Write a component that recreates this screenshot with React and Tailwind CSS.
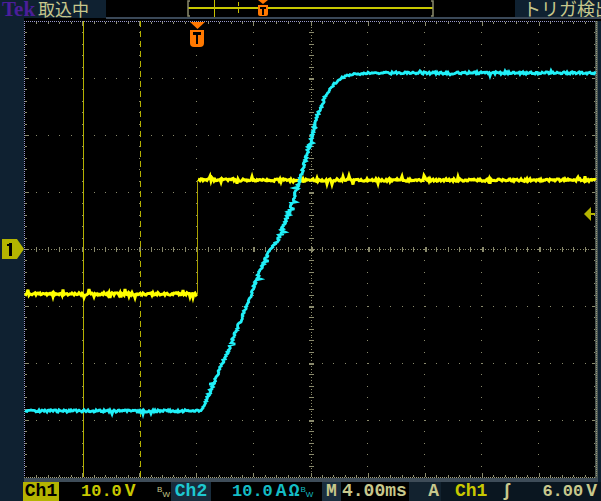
import React from 'react';

// scope screen: plot origin in page coords
const OX = 24;
const OY = 21;
const X0 = 1;
const DX = 57.1;
const DY = 57;
const MX = DX / 5;
const MY = DY / 5;

const gx = (k) => X0 + k * DX;
const gy = (k) => k * DY;

function rng(seed) {
    let s = seed >>> 0;
    return () => {
        s = (s * 1664525 + 1013904223) >>> 0;
        return s / 4294967296;
    };
}

// noisy polyline, points given in page coords
function noisyPath(points, seed, amp, spike = 0) {
    const r = rng(seed);
    let d = '';
    for (let i = 0; i < points.length - 1; i++) {
        const [x1, y1] = points[i];
        const [x2, y2] = points[i + 1];
        const steep = Math.abs(y2 - y1) > Math.abs(x2 - x1);
        const n = Math.max(1, Math.round(Math.max(Math.abs(x2 - x1), Math.abs(y2 - y1))));
        for (let j = 0; j < n; j++) {
            const t = j / n;
            let x = x1 + (x2 - x1) * t;
            let y = y1 + (y2 - y1) * t;
            let jitter = (r() - 0.5) * amp;
            if (spike && r() < spike) jitter += (r() < 0.5 ? -1 : 1) * (2 + r() * 2);
            if (steep) x += jitter;
            else y += jitter;
            d += (d ? 'L' : 'M') + (x - OX).toFixed(1) + ',' + (y - OY).toFixed(1);
        }
    }
    const last = points[points.length - 1];
    d += 'L' + (last[0] - OX) + ',' + (last[1] - OY);
    return d;
}

const CYAN_PTS = [
    [25, 411], [200, 411], [203, 408], [210, 392], [220, 369], [230, 346], [240, 322],
    [250, 297], [260, 271], [268, 253], [273, 246], [278, 240], [285, 222], [295, 195],
    [305, 161], [312, 136], [318, 114], [325, 97], [333, 85], [343, 77], [355, 74],
    [370, 73], [596, 73],
];

function Graticule() {
    const lines = [];
    const grid = '#8a8a6c';
    for (let k = 1; k < 10; k++) {
        if (k === 5) continue;
        lines.push(<line key={'v' + k} x1={gx(k)} y1={0} x2={gx(k)} y2={gy(8)} stroke={grid} strokeDasharray={`1 ${MY - 1}`} />);
    }
    for (let k = 1; k < 8; k++) {
        if (k === 4) continue;
        lines.push(<line key={'h' + k} x1={X0} y1={gy(k)} x2={gx(10)} y2={gy(k)} stroke={grid} strokeDasharray={`1 ${MX - 1}`} />);
    }
    // center lines
    const cx = gx(5);
    const cy = gy(4);
    lines.push(<line key="ch" x1={X0} y1={cy + 0.5} x2={gx(10)} y2={cy + 0.5} stroke={grid} strokeDasharray="1 1.86" />);
    lines.push(<line key="cv" x1={cx + 0.5} y1={0} x2={cx + 0.5} y2={gy(8)} stroke={grid} strokeDasharray="1 1.85" />);
    for (let i = 1; i < 50; i++) {
        const x = Math.round(X0 + i * MX);
        const major = i % 5 === 0;
        lines.push(<rect key={'cht' + i} x={x} y={cy - 2} width={major ? 2 : 1} height={5} fill={grid} />);
        lines.push(<rect key={'tt' + i} x={x} y={1} width={1} height={major ? 4 : 2} fill={grid} />);
        lines.push(<rect key={'bt' + i} x={x} y={gy(8) - (major ? 4 : 2)} width={1} height={major ? 4 : 2} fill={grid} />);
    }
    for (let i = 1; i < 40; i++) {
        const y = Math.round(i * MY);
        const major = i % 5 === 0;
        lines.push(<rect key={'cvt' + i} x={cx - 2} y={y} width={5} height={major ? 2 : 1} fill={grid} />);
        lines.push(<rect key={'lt' + i} x={1} y={y} width={major ? 4 : 2} height={1} fill={grid} />);
        lines.push(<rect key={'rt' + i} x={gx(10) - (major ? 4 : 2)} y={y} width={major ? 4 : 2} height={1} fill={grid} />);
    }
    return <g shapeRendering="crispEdges">{lines}</g>;
}

function Scope() {
    const yLow = noisyPath([[25, 294], [197, 294]], 7, 2.6, 0.06);
    const yHigh = noisyPath([[198, 180], [596, 180]], 11, 2.6, 0.06);
    const cyan = noisyPath(CYAN_PTS, 23, 2.4, 0.02);
    return (
        <svg width="577" height="461" className="block shrink-0">
            <Graticule />
            {/* borders */}
            <line x1={0} y1={0.5} x2={gx(10)} y2={0.5} stroke="#9898cc" strokeDasharray="1 1" shapeRendering="crispEdges" />
            <line x1={0.5} y1={0} x2={0.5} y2={gy(8)} stroke="#9898cc" strokeDasharray="1 1" shapeRendering="crispEdges" />
            <line x1={0} y1={gy(8) + 0.5} x2={gx(10)} y2={gy(8) + 0.5} stroke="#a0a080" strokeDasharray="1 1" shapeRendering="crispEdges" />
            <rect x={0} y={gy(8) + 1} width={577} height={4} fill="#3e4c58" />
            <rect x={571} y={0} width={3} height={gy(8) + 1} fill="#4a5450" />
            <line x1={572.5} y1={0} x2={572.5} y2={gy(8)} stroke="#9a9a7a" strokeDasharray="1 1" shapeRendering="crispEdges" />
            <rect x={574} y={0} width={3} height={461} fill="#0f2131" />

            {/* cursors */}
            <line x1={59.5} y1={0} x2={59.5} y2={gy(8)} stroke="#b4b000" />
            <line x1={116.5} y1={0} x2={116.5} y2={gy(8)} stroke="#b4b000" strokeDasharray="6 4" />

            {/* traces */}
            <line x1={173.5} y1={273} x2={173.5} y2={159} stroke="#a8a000" />
            <path d={yLow} fill="none" stroke="#ffff00" strokeWidth="3" />
            <path d={yHigh} fill="none" stroke="#ffff00" strokeWidth="3" />
            <path d={cyan} fill="none" stroke="#20f0f8" strokeWidth="2.8" />

            {/* trigger position marker */}
            <polygon points="166,1 181,1 173.5,8" fill="#ff7800" />
            <path d="M166,9 H180 V22 Q180,26 176,26 H170 Q166,26 166,22 Z" fill="#ff7800" />
            <rect x={169} y={11} width={8} height={3} fill="#000" />
            <rect x={172} y={13} width={2} height={10} fill="#000" />

            {/* trigger level */}
            <polygon points="560,193 567,186 567,200" fill="#b4b400" />
            <rect x={567} y={192} width={4} height={2} fill="#b4b400" />
        </svg>
    );
}

function RecordBar() {
    return (
        <svg width="409" height="17" className="block shrink-0">
            <rect x={82} y={7} width={245} height={2} fill="#c8c800" />
            <path d="M84,1 H82 V16 H84" fill="none" stroke="#8a8a6c" strokeWidth="1.5" />
            <path d="M325,1 H327 V16 H325" fill="none" stroke="#8a8a6c" strokeWidth="1.5" />
            <rect x={108} y={0} width={1} height={17} fill="#c8c000" />
            <line x1={132.5} y1={2} x2={132.5} y2={16} stroke="#c8c000" strokeDasharray="4 3" />
            <polygon points="152,0 162,0 157,4" fill="#ff7800" />
            <path d="M152,5 H162 V14 Q162,16 160,16 H154 Q152,16 152,14 Z" fill="#ff7800" />
            <rect x={154} y={7} width={6} height={2} fill="#000" />
            <rect x={156} y={8} width={2} height={7} fill="#000" />
        </svg>
    );
}

function TopBar() {
    return (
        <div className="flex h-[21px]">
            <div className="w-[106px] shrink-0 flex flex-col">
                <div className="h-[18px] bg-[#0f2131] flex items-center pl-[2px] gap-[3px]">
                    <span className="font-['Liberation_Serif',serif] font-bold text-[21px] leading-[18px] text-[#4b1e9a]">Tek</span>
                    <span className="font-['Noto_Sans_CJK_JP',sans-serif] text-[17px] leading-[18px] text-[#c8c88c]">取込中</span>
                </div>
                <div className="flex h-[3px]">
                    <div className="w-[24px] bg-[#0f2131]" />
                    <div className="flex-1 bg-black" />
                </div>
            </div>
            <div className="flex-1 min-w-0 flex flex-col">
                <div className="flex h-[17px]">
                    <RecordBar />
                    <div className="flex-1 min-w-0 bg-[#0f2131] overflow-hidden whitespace-nowrap pl-[8px] font-['Noto_Sans_CJK_JP',sans-serif] text-[18px] leading-[17px] text-[#c8c88c]">
                        トリガ検出
                    </div>
                </div>
                <div className="h-[2px] bg-[#3a4858]" />
                <div className="h-[2px] bg-black" />
            </div>
        </div>
    );
}

function LeftStrip() {
    return (
        <div className="w-[24px] shrink-0 bg-[#0f2131] flex flex-col">
            <div className="h-[218px]" />
            <svg width="24" height="21" className="block">
                <polygon points="2,0 17,0 24,10 17,20 2,20" fill="#b4b400" />
                <rect x={9} y={4} width={3} height={13} fill="#000" />
                <rect x={7} y={5} width={3} height={2} fill="#000" />
            </svg>
        </div>
    );
}

function BW({ color }) {
    return (
        <span className={"flex font-['Liberation_Sans',sans-serif] font-normal text-[8px] leading-none " + color}>
            <span className="mt-[4px]">B</span>
            <span className="mt-[9px]">W</span>
        </span>
    );
}

function BottomBar() {
    return (
        <div className="flex h-[19px] bg-black font-['Liberation_Mono',monospace] font-bold text-[18px] leading-[19px] whitespace-nowrap">
            <div className="w-[23px] bg-[#0f2131]" />
            <div className="w-[36px] bg-[#b4b400] text-black text-center">Ch1</div>
            <div className="w-[112px] flex text-[#c8c800]">
                <span className="ml-[22px] text-[17px]">10.0</span>
                <span className="ml-[3px]">V</span>
                <span className="ml-auto mr-[1px] h-full"><BW color="text-[#c8c88c]" /></span>
            </div>
            <div className="w-[40px] bg-[#182c3c] text-[#1ec8d0] text-center">Ch2</div>
            <div className="w-[111px] flex text-[#14bcc4]">
                <span className="ml-[21px] text-[17px]">10.0</span>
                <span className="ml-[3px]">A</span>
                <span className="ml-[2px]">Ω</span>
                <span className="ml-[1px] h-full"><BW color="text-[#14bcc4]" /></span>
            </div>
            <div className="w-[19px] bg-[#1a2e3e] text-[#c8c88c] text-center">M</div>
            <div className="w-[68px] text-[#c8c88c] pl-[1px]">4.00ms</div>
            <div className="w-[32px] bg-[#12222f] text-[#c8c88c] text-right pr-[2px]">A</div>
            <div className="flex-1 flex bg-[#0a1620]">
                <span className="ml-[14px] text-[#c8c800]">Ch1</span>
                <span className="ml-[14px] text-[#c8c88c]">ʃ</span>
                <span className="ml-auto text-[17px] text-[#c8c88c]">6.00</span>
                <span className="ml-[3px] mr-[4px] text-[#c8c88c]">V</span>
            </div>
        </div>
    );
}

export default function App() {
    return (
        <div className="w-[601px] h-[501px] bg-black flex flex-col overflow-hidden">
            <TopBar />
            <div className="flex h-[461px]">
                <LeftStrip />
                <Scope />
            </div>
            <BottomBar />
        </div>
    );
}
